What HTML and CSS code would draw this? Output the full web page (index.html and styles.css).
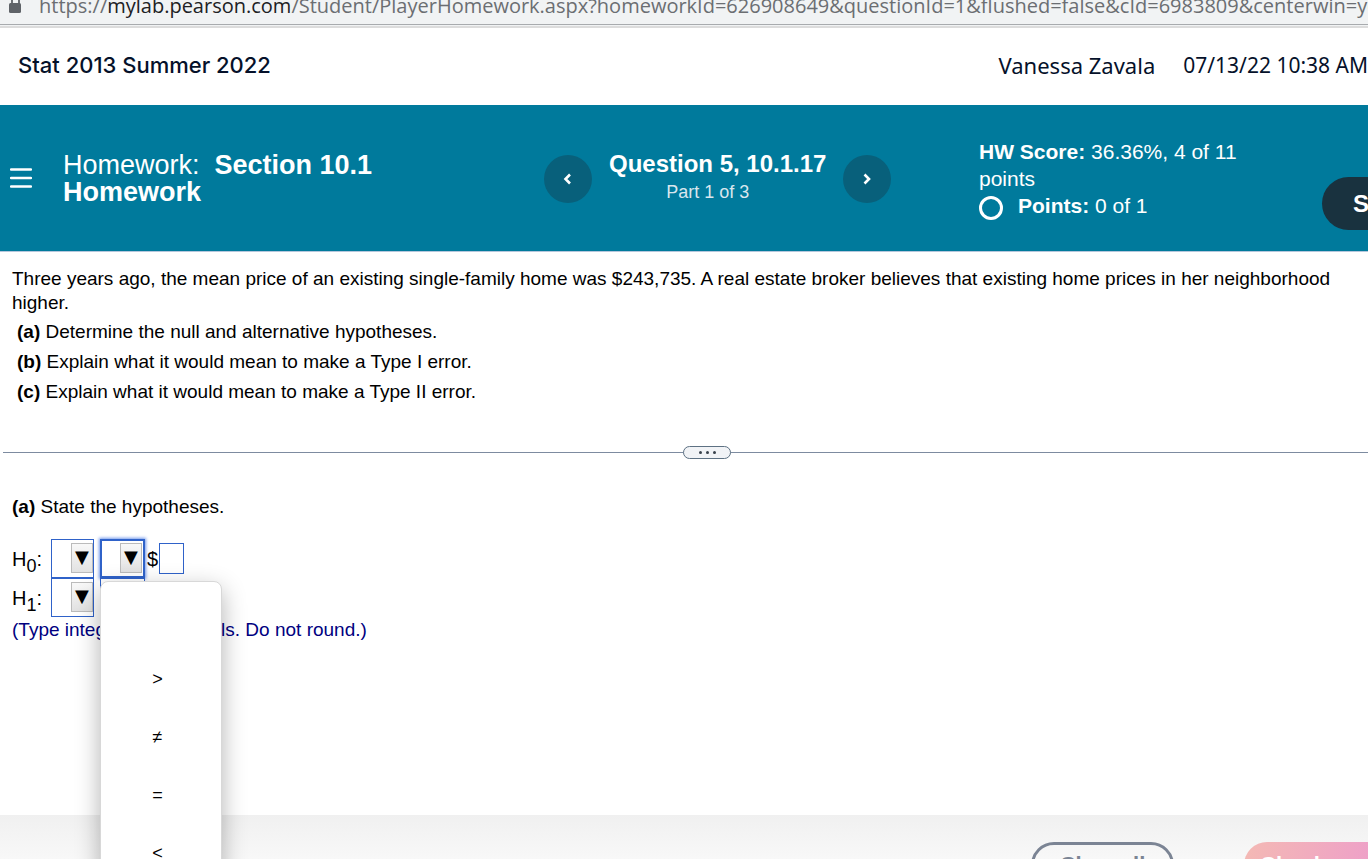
FILE: index.html
```html
<!DOCTYPE html>
<html lang="en">
<head>
<meta charset="utf-8">
<title>Stat 2013 Summer 2022</title>
<link rel="stylesheet" href="styles.css">
</head>
<body>
<div class="address-bar">
  <svg class="lock" width="13" height="20" viewBox="0 0 13 20" aria-hidden="true"><path d="M3 10V6a3.5 3.5 0 0 1 7 0v4" fill="none" stroke="#5f6368" stroke-width="1.8"/><rect x="0" y="9" width="12" height="10" rx="1.5" fill="#5f6368"/></svg>
  <span class="url">https://<span class="host">mylab.pearson.com</span>/Student/PlayerHomework.aspx?homeworkId=626908649&amp;questionId=1&amp;flushed=false&amp;cId=6983809&amp;centerwin=yes</span>
</div>
<header class="course">
  <span class="course-name">Stat 2013 Summer 2022</span>
  <span class="user">Vanessa Zavala</span>
  <span class="date">07/13/22 10:38 AM</span>
</header>
<div class="band">
  <button class="menu" aria-label="Menu"><svg width="22" height="20" viewBox="0 0 22 20"><path d="M1 1.5h20M1 10h20M1 18.5h20" stroke="#fff" stroke-width="2.4" stroke-linecap="round"/></svg></button>
  <h1 class="assignment">Homework:&nbsp; <b>Section 10.1 Homework</b></h1>
  <nav class="pager">
    <button class="round" aria-label="Previous question"><svg width="12" height="14" viewBox="0 0 12 14"><path d="M8 2.5 3.5 7 8 11.5" fill="none" stroke="#fff" stroke-width="2.6"/></svg></button>
    <div class="question">
      <h2>Question 5, 10.1.17</h2>
      <p>Part 1 of 3</p>
    </div>
    <button class="round" aria-label="Next question"><svg width="12" height="14" viewBox="0 0 12 14"><path d="M3.5 2.5 8 7l-4.5 4.5" fill="none" stroke="#fff" stroke-width="2.6"/></svg></button>
  </nav>
  <div class="score">
    <p><b>HW Score:</b> 36.36%, 4 of 11 points</p>
    <p class="points"><span class="ring"></span><span><b>Points:</b> 0 of 1</span></p>
  </div>
  <button class="save">Save</button>
</div>
<main>
  <section class="prompt">
    <p class="intro">Three years ago, the mean price of an existing single-family home was $243,735. A real estate broker believes that existing home prices in her neighborhood<br>higher.</p>
    <ul>
      <li><b>(a)</b> Determine the null and alternative hypotheses.</li>
      <li><b>(b)</b> Explain what it would mean to make a Type I error.</li>
      <li><b>(c)</b> Explain what it would mean to make a Type II error.</li>
    </ul>
  </section>
  <div class="divider"><button class="handle" aria-label="Resize"><i></i><i></i><i></i></button></div>
  <section class="answer">
    <p class="state"><b>(a)</b> State the hypotheses.</p>
    <div class="row">
      <label class="hyp" for="h0p">H<sub>0</sub>:</label>
      <span class="pick"><select id="h0p"><option></option><option>μ</option><option>p</option><option>σ</option></select><span class="arrow">▼</span></span>
      <span class="pick wide active"><select aria-label="Relation for null hypothesis"><option></option><option>&gt;</option><option>≠</option><option>=</option><option>&lt;</option></select><span class="arrow">▼</span>
        <span class="options"><button aria-label="Blank"></button><button>&gt;</button><button>≠</button><button>=</button><button>&lt;</button></span>
      </span>
      <label class="dollar" for="v0">$</label><input id="v0" type="text">
    </div>
    <div class="row">
      <label class="hyp" for="h1p">H<sub>1</sub>:</label>
      <span class="pick"><select id="h1p"><option></option><option>μ</option><option>p</option><option>σ</option></select><span class="arrow">▼</span></span>
      <span class="pick wide"><select aria-label="Relation for alternative hypothesis"><option></option></select></span>
    </div>
    <p class="hint">(Type integers or decimals. Do not round.)</p>
  </section>
</main>
<footer>
  <button class="clear">Clear all</button>
  <button class="check">Check answer</button>
</footer>
</body>
</html>
```

FILE: styles.css
```css
* { box-sizing: border-box; }
html, body { height: 100%; }
body { margin: 0; display: flex; flex-direction: column; overflow: hidden; background: #fff; color: #000; font: 19px/24px "Liberation Sans", Arial, sans-serif; }
p, h1, h2, ul { margin: 0; padding: 0; font-weight: 400; }
button { font: inherit; border: 0; padding: 0; background: none; cursor: pointer; }

.address-bar { flex: none; display: flex; align-items: flex-end; gap: 17px; height: 28px; padding: 0 0 6px 9px; background: #f1f3f4; border-bottom: 2px solid #dcdcdc; box-shadow: inset 0 -1px #f1f3f4, inset 0 -2px #a8abae; overflow: hidden; white-space: nowrap; }
.lock { flex: none; margin-bottom: 6px; }
.url { color: #6b6e72; font: 20px/28px "Open Sans", sans-serif; }
.host { color: #202124; }

.course { flex: none; display: flex; align-items: center; height: 77px; padding: 0 0 3px 18px; color: #05112a; white-space: nowrap; font: 22px/30px "Noto Sans", sans-serif; }
.course-name { font: 500 22px/30px Inter, sans-serif; margin-right: auto; }
.date { margin-left: 28px; font-size: 21px; }

.band { flex: none; display: flex; height: 147px; padding-left: 10px; background: #007a9c; border-bottom: 1px solid #b5c7dc; color: #fff; overflow: hidden; }
.menu { flex: none; align-self: flex-start; margin-top: 63px; height: 20px; display: flex; }
.assignment { flex: 0 0 480px; padding: 47px 120px 0 31px; font-size: 27px; line-height: 27px; }
.pager { flex: 0 0 435px; display: flex; align-items: flex-start; gap: 17px; padding: 46px 0 0 32px; }
.round { flex: none; width: 48px; height: 48px; margin-top: 4px; border-radius: 50%; background: #08607b; display: flex; align-items: center; justify-content: center; }
.question { text-align: center; white-space: nowrap; }
.question h2 { font-weight: 700; font-size: 24px; line-height: 26px; }
.question p { padding-right: 20px; color: #d9e6ee; font-size: 18px; line-height: 30px; }
.score { flex: 1 1 290px; padding: 33px 50px 0 32px; font-size: 21px; line-height: 27px; }
.points { display: flex; gap: 15px; }
.ring { width: 24px; height: 24px; border: 3px solid #fff; border-radius: 50%; margin-top: 4px; }
.save { flex: none; align-self: flex-start; width: 110px; height: 53px; margin: 72px -64px 0 0; border-radius: 27px; background: #19323f; color: #fff; font-weight: 700; font-size: 24px; text-align: left; padding-left: 31px; }

main { flex: 1; min-height: 0; }
.prompt { padding: 15px 0 0 12px; white-space: nowrap; }
ul { list-style: none; padding: 2px 0 0 5px; }
li { line-height: 30px; }
.divider { display: flex; justify-content: center; height: 15px; margin: 38px 0 0 3px; padding-left: 43px; background: linear-gradient(#7d8ba0, #7d8ba0) 0 7px / 100% 1px no-repeat; }
.handle { width: 48px; height: 13px; margin-top: 1px; border: 1px solid #5d7183; border-radius: 7px; background: #f1f3f6; display: flex; align-items: center; justify-content: center; gap: 4px; }
.handle i { width: 3px; height: 3px; border-radius: 50%; background: #38414b; }
.answer { padding: 35px 0 0 12px; }
.state { margin-bottom: 20px; }
.row { display: flex; align-items: flex-start; height: 39px; font-size: 20px; }
.hyp { width: 39px; line-height: 40px; }
.hyp sub { font-size: 18px; line-height: 0; vertical-align: -6px; }
.pick { position: relative; display: flex; width: 43px; height: 39px; margin-right: 6px; }
.pick.wide { width: 45px; margin-right: 2px; }
select { appearance: none; width: 100%; height: 100%; border: 1px solid #2f62c9; border-radius: 0; background: #fff; font: inherit; outline: 0; }
.active select { border-width: 2px; box-shadow: 0 0 3px 1px #6f96ea; }
.arrow { position: absolute; right: 1px; top: 4px; width: 22px; height: 30px; border: 1px solid #bbb; background: linear-gradient(#f8f8f8, #e2e2e2); pointer-events: none; text-align: center; font: 18px/26px "DejaVu Sans", sans-serif; }
.active .arrow { right: 3px; }
.dollar { line-height: 40px; }
input { width: 25px; height: 31px; margin: 4px 0 0 1px; border: 1px solid #2f62c9; padding: 0; font: inherit; }
.options { position: absolute; z-index: 2; left: 0; top: 42px; width: 122px; border: 1px solid #d8d8d8; border-radius: 8px; background: #fff; box-shadow: 0 8px 24px rgba(0, 0, 0, .3); padding: 10px 0; display: flex; flex-direction: column; }
.options button { height: 58px; padding-right: 7px; font: 18px/58px "Liberation Sans", sans-serif; }
.hint { color: #000080; padding-top: 1px; }

footer { flex: none; display: flex; align-items: flex-start; justify-content: flex-end; gap: 70px; height: 44px; padding-top: 27px; background: linear-gradient(#f0f0f0, #f8f8f8); overflow: hidden; }
footer button { flex: none; height: 46px; border-radius: 23px; font-size: 22px; font-weight: 700; line-height: 40px; }
.clear { width: 143px; border: 3px solid #7b8494; color: #7b8494; }
.check { width: 180px; margin-right: -56px; background: linear-gradient(100deg, #f4b9b4, #eea0c8 70%); color: #fff; }
```
